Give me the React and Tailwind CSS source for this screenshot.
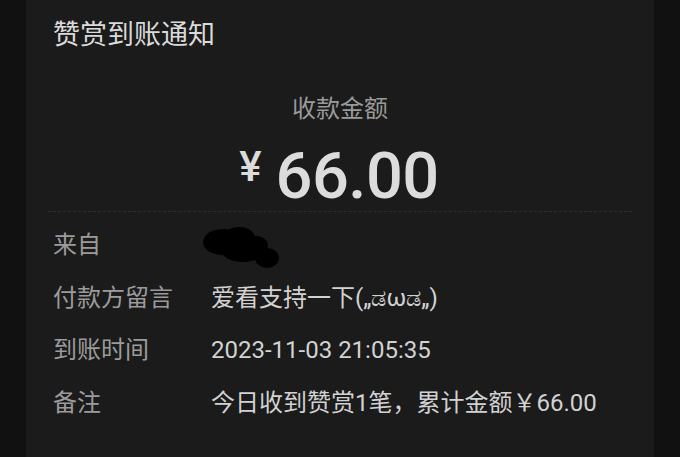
import React from 'react';

const rows = [
  { label: '来自', value: null },
  { label: '付款方留言', value: '爱看支持一下(„ಡωಡ„)' },
  { label: '到账时间', value: '2023-11-03 21:05:35' },
  { label: '备注', value: '今日收到赞赏1笔，累计金额￥66.00' },
];

const Blob = () => (
  <svg width="82" height="46" viewBox="0 0 82 46" className="block">
    <ellipse cx="22" cy="17" rx="20" ry="13" fill="#000" />
    <ellipse cx="38" cy="13" rx="16" ry="11" fill="#000" />
    <ellipse cx="42" cy="25" rx="22" ry="12" fill="#000" />
    <ellipse cx="66" cy="33" rx="12" ry="10" fill="#000" />
    <ellipse cx="56" cy="21" rx="11" ry="10" fill="#000" />
  </svg>
);

export default function App() {
  return (
    <div
      className="w-[680px] h-[457px] bg-[#111111] overflow-hidden"
      style={{ fontFamily: 'Roboto, "Noto Sans CJK SC", sans-serif' }}
    >
      <div className="mx-[26px] h-full bg-[#1b1b1b] flex flex-col">
        <div className="pl-[27px] pt-[17px] h-[36px] box-content text-[27px] leading-[36px] text-[#dadada]">
          赞赏到账通知
        </div>

        <div className="mt-[41px] text-center text-[24px] leading-[30px] text-[#9a9a9a]">
          收款金额
        </div>

        <div className="mt-[24px] flex justify-center items-start pr-[2px]">
          <span className="text-[42px] leading-[40px] font-medium text-[#dcdcdc] mr-[14px] mt-[-1px]">¥</span>
          <span className="text-[65px] leading-[56px] font-medium text-[#dcdcdc] tracking-[-0.5px]">66.00</span>
        </div>

        <div className="mt-[7px] mx-[22px] border-t border-dashed border-[#2e2e2e]" />

        <div className="pt-[7px] flex flex-col">
          {rows.map((r) => (
            <div key={r.label} className="h-[52.5px] flex items-center pl-[27px]">
              <div className="w-[158px] text-[24px] text-[#9b9b9b] leading-[30px]">{r.label}</div>
              <div className="text-[24px] text-[#d2d2d2] leading-[30px]">
                {r.value === null ? (
                  <div className="-ml-[10px] mt-[6px]">
                    <Blob />
                  </div>
                ) : (
                  r.value
                )}
              </div>
            </div>
          ))}
        </div>
      </div>
    </div>
  );
}
